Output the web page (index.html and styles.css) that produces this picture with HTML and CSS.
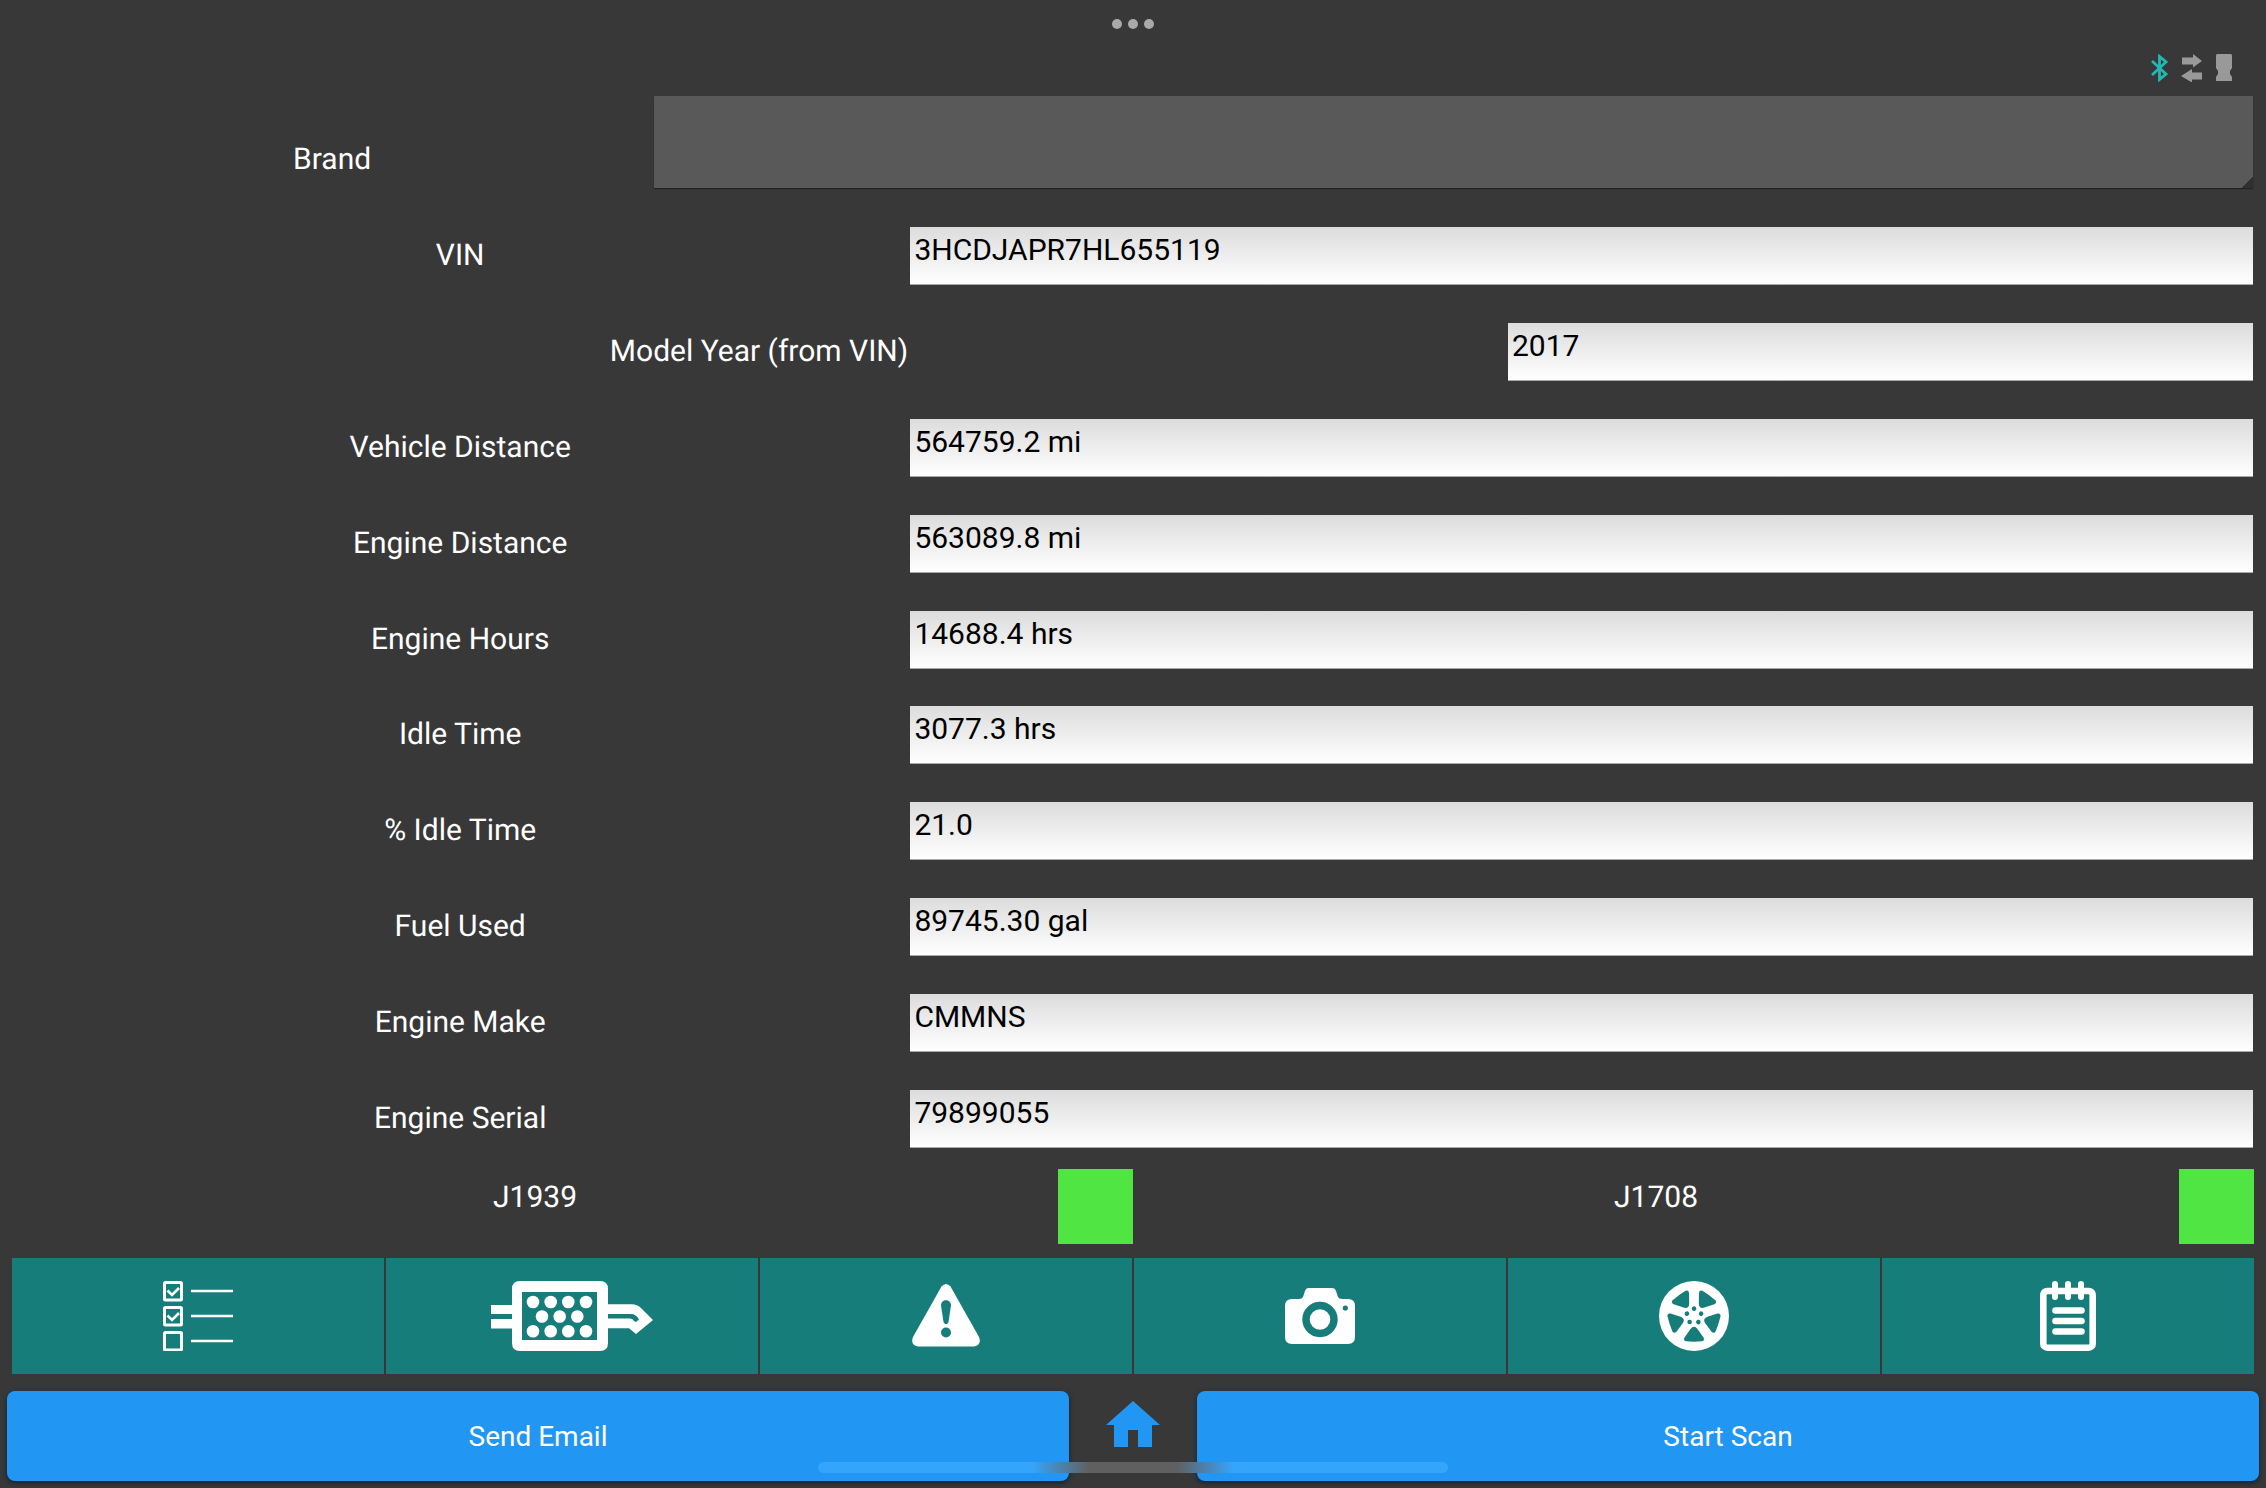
FILE: index.html
```
<!DOCTYPE html>
<html lang="en">
<head>
<meta charset="utf-8">
<meta name="viewport" content="width=device-width, initial-scale=1">
<title>Vehicle Information</title>
<link rel="stylesheet" href="styles.css">
</head>
<body>
<div class="app">
  <header class="topbar">
    <button class="window-dots" type="button" aria-label="Window options"><span></span><span></span><span></span></button>
    <div class="status-icons">
      <svg width="17" height="28" viewBox="0 0 17 28" fill="none" stroke="#22b8b4" stroke-width="2.800"><path d="M1 7L15 20L8.500 25.500V2.500L15 8L1 21"/></svg>
      <svg width="22" height="28" viewBox="0 0 22 28" fill="#999"><path d="M1 3.500H12V0L21 7L12 13.500V10.500H1ZM21 18.500H11V15L0 22L11 28.500V25.500H21Z"/></svg>
      <svg width="16" height="28" viewBox="0 0 16 28" fill="#999"><path d="M1 0H15L16 1V14L14 17V20L16 23V27H0V23L2 20V17L0 14V1Z"/></svg>
    </div>
  </header>

  <form class="form">
    <div class="row row-brand">
      <label for="brand">Brand</label>
      <select id="brand" class="spinner"><option value=""></option></select>
    </div>
    <div class="row"><label for="vin">VIN</label><input id="vin" type="text" value="3HCDJAPR7HL655119"></div>
    <div class="row row-year"><label for="year">Model Year (from VIN)</label><input id="year" type="text" value="2017"></div>
    <div class="row"><label for="vdist">Vehicle Distance</label><input id="vdist" type="text" value="564759.2 mi"></div>
    <div class="row"><label for="edist">Engine Distance</label><input id="edist" type="text" value="563089.8 mi"></div>
    <div class="row"><label for="hours">Engine Hours</label><input id="hours" type="text" value="14688.4 hrs"></div>
    <div class="row"><label for="idle">Idle Time</label><input id="idle" type="text" value="3077.3 hrs"></div>
    <div class="row"><label for="pidle">% Idle Time</label><input id="pidle" type="text" value="21.0"></div>
    <div class="row"><label for="fuel">Fuel Used</label><input id="fuel" type="text" value="89745.30 gal"></div>
    <div class="row"><label for="make">Engine Make</label><input id="make" type="text" value="CMMNS"></div>
    <div class="row"><label for="serial">Engine Serial</label><input id="serial" type="text" value="79899055"></div>
  </form>

  <section class="protocols">
    <div class="protocol"><span class="protocol-name">J1939</span><span class="lamp"></span></div>
    <div class="protocol"><span class="protocol-name">J1708</span><span class="lamp"></span></div>
  </section>

  <nav class="tools">
    <button type="button" aria-label="Checklist">
      <svg width="70" height="70" viewBox="0 0 70 70" fill="none" stroke="#fff">
        <g stroke-width="3"><rect x="1.500" y="1.500" width="17" height="17.500" rx="1"/><rect x="1.500" y="26.500" width="17" height="17.500" rx="1"/><rect x="1.500" y="51.500" width="17" height="17.500" rx="1"/></g>
        <path stroke-width="2.600" d="M4.500 9.500L9 14L16 7M4.500 34.500L9 39L16 32"/>
        <path stroke-width="2.600" d="M28 10H70M28 35H70M28 60H70"/>
      </svg>
    </button>
    <button type="button" aria-label="Particulate filter">
      <svg width="162" height="70" viewBox="0 0 162 70" fill="#fff">
        <path fill-rule="evenodd" d="M29 0H109Q117 0 117 8V62Q117 70 109 70H29Q21 70 21 62V8Q21 0 29 0ZM31 11V59H106V11Z"/>
        <path d="M0 24H22V33H0ZM0 38H22V47.500H0Z"/>
        <path d="M116 23.300H141Q146 23.300 150 27L162 39L145 53L138 47.300H116V37.500H139Q142 37.500 143 40L145 41L148 38.500Q145 33 140 33H116Z"/>
        <circle cx="42" cy="21" r="6.300"/><circle cx="59.700" cy="21" r="6.300"/><circle cx="77.300" cy="21" r="6.300"/><circle cx="95" cy="21" r="6.300"/>
        <circle cx="51" cy="35.500" r="6.300"/><circle cx="68.700" cy="35.500" r="6.300"/><circle cx="86.300" cy="35.500" r="6.300"/>
        <circle cx="42" cy="50.300" r="6.300"/><circle cx="59.700" cy="50.300" r="6.300"/><circle cx="77.300" cy="50.300" r="6.300"/><circle cx="95" cy="50.300" r="6.300"/>
      </svg>
    </button>
    <button type="button" aria-label="Faults">
      <svg width="68" height="64" viewBox="0 0 68 64">
        <path fill="#fff" d="M29.500 2.500Q34 -2.500 38.500 2.500L67 53Q70 60.500 62 62.500H6Q-2 60.500 1 53Z"/>
        <path fill="#177d7b" d="M29 21.500C29 14.500 39 14.500 39 21.500L36.500 38Q34 42.500 31.500 38Z"/>
        <circle cx="34" cy="48.500" r="5" fill="#177d7b"/>
      </svg>
    </button>
    <button type="button" aria-label="Camera">
      <svg width="70" height="56" viewBox="0 0 70 56">
        <path fill="#fff" d="M23 0H47Q50 0 51 3L53 9Q54 11 57 11H63Q70 11 70 18V49Q70 56 63 56H7Q0 56 0 49V18Q0 11 7 11H14Q17 11 18 9L20 3Q21 0 23 0Z"/>
        <circle cx="35" cy="31.500" r="14" fill="none" stroke="#177d7b" stroke-width="7.400"/>
        <circle cx="60.300" cy="20" r="2.600" fill="#177d7b"/>
      </svg>
    </button>
    <button type="button" aria-label="Wheels">
      <svg width="70" height="70" viewBox="0 0 70 70">
        <defs><g id="spoke"><path d="M31.500 48Q35 43.500 38.500 48L44.500 56.500Q46 59.500 43 60.300Q35 61 27 60.300Q24 59.500 25.500 56.500Z"/><circle cx="30.600" cy="41" r="2.300"/></g></defs>
        <circle cx="35" cy="35" r="35" fill="#fff"/>
        <g fill="#177d7b"><use href="#spoke"/><use href="#spoke" transform="rotate(72 35 35)"/><use href="#spoke" transform="rotate(144 35 35)"/><use href="#spoke" transform="rotate(216 35 35)"/><use href="#spoke" transform="rotate(288 35 35)"/></g>
      </svg>
    </button>
    <button type="button" aria-label="Notes">
      <svg width="56" height="70" viewBox="0 0 56 70" fill="none" stroke="#fff" stroke-width="6.600">
        <rect x="3.300" y="10" width="49.400" height="56.700" rx="4"/>
        <path stroke-width="6" stroke-linecap="round" d="M15 3V16M28 3V16M41 3V16"/>
        <path stroke-linecap="round" d="M15.500 29.500H41.500M15.500 40H41.500M15.500 50.500H41.500"/>
      </svg>
    </button>
  </nav>

  <footer class="actions">
    <button class="action" type="button">Send Email</button>
    <a class="home" href="#" aria-label="Home"><svg width="54" height="46" viewBox="0 0 54 46" fill="#2196f3"><path d="M27 0L54 24H46V46H32V29H22V46H8V24H0Z"/></svg></a>
    <button class="action" type="button">Start Scan</button>
    <div class="home-indicator"></div>
  </footer>
</div>
</body>
</html>
```
FILE: styles.css
```
* { box-sizing: border-box; }

body {
  margin: 0;
  background: #383838;
  color: #fff;
  font-family: Roboto, "Liberation Sans", sans-serif;
  font-size: 30px;
  line-height: 36px;
  font-kerning: normal;
  text-rendering: geometricPrecision;
}

button, input, select { font: inherit; border: 0; margin: 0; padding: 0; border-radius: 0; }
svg { display: block; }

.app { min-height: 100vh; display: flex; flex-direction: column; }

/* Top bar */
.topbar {
  height: 96px;
  display: grid;
  grid-template-columns: 1fr auto 1fr;
}
.window-dots {
  grid-column: 2;
  align-self: start;
  height: 48px;
  display: flex;
  align-items: center;
  gap: 6px;
  background: none;
}
.window-dots span { width: 10px; height: 10px; border-radius: 50%; background: #aaa; }
.status-icons {
  display: flex;
  justify-content: flex-end;
  align-items: flex-end;
  gap: 13px;
  padding: 0 34px 14px 0;
}

/* Vehicle form */
.form { flex: 1; display: flex; flex-direction: column; padding: 0 13px 0 12px; }
.row {
  flex: 1;
  min-height: 72px;
  display: grid;
  grid-template-columns: 2fr 3fr;
  align-items: center;
}
.row label { text-align: center; }
.row input {
  width: auto;
  min-width: 0;
  height: 58px;
  margin-left: 2px;
  padding: 0 4px 12px;
  color: #000;
  background: linear-gradient(#dcdcdc, #fff);
  border-bottom: 1px solid #aaa;
}
.row-year { grid-template-columns: 2fr 1fr; }
.row-brand {
  flex: none;
  height: 112px;
  grid-template-columns: 2fr 5fr;
}
.row-brand label { padding-top: 16px; }
.spinner {
  appearance: none;
  align-self: start;
  height: 92px;
  margin-left: 2px;
  padding: 0 12px;
  color: #fff;
  background: linear-gradient(135deg, #595959 calc(100% - 8px), #303030 calc(100% - 8px));
  box-shadow: 0 1px 1px #222;
}

/* Protocol lamps */
.protocols { display: grid; grid-template-columns: 1fr 1fr; padding: 2px 12px 14px; }
.protocol { display: flex; }
.protocol-name { flex: 1; text-align: center; padding-top: 11px; }
.lamp { width: 75px; height: 75px; background: #50e542; }

/* Tool tiles */
.tools { display: grid; grid-template-columns: repeat(6, 1fr); gap: 2px; padding: 0 12px; }
.tools button {
  height: 116px;
  display: flex;
  align-items: center;
  justify-content: center;
  background: #177d7b;
}

/* Bottom actions */
.actions {
  position: relative;
  display: grid;
  grid-template-columns: 1fr 128px 1fr;
  padding: 17px 7px 7px;
}
.action {
  height: 90px;
  padding-top: 2px;
  color: #fff;
  font-size: 28px;
  background: #2196f3;
  border-radius: 8px;
  box-shadow: 0 2px 5px #0d2338;
}
.home { display: flex; justify-content: center; padding-top: 10px; }
.home-indicator {
  position: absolute;
  left: 50%;
  bottom: 15px;
  width: 630px;
  height: 11px;
  margin-left: -315px;
  border-radius: 6px;
  background: linear-gradient(90deg, #35a5fb 34%, #606060 43%, #606060 57%, #35a5fb 66%);
  pointer-events: none;
}
```
